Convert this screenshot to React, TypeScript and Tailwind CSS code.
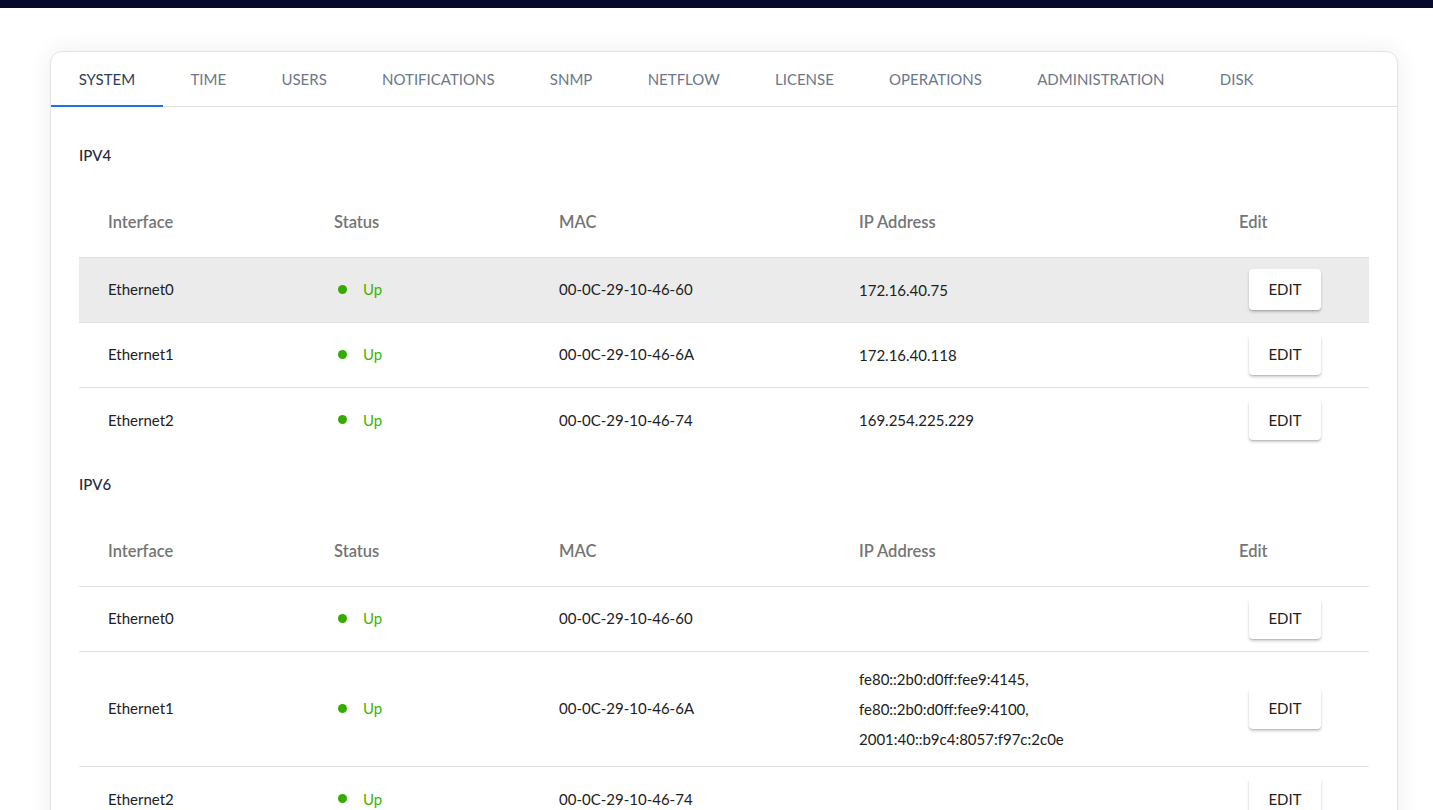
const TABS = [
  "System",
  "Time",
  "Users",
  "Notifications",
  "SNMP",
  "Netflow",
  "License",
  "Operations",
  "Administration",
  "Disk",
];

type Row = { name: string; mac: string; ips: string[] };

const IPV4_ROWS: Row[] = [
  { name: "Ethernet0", mac: "00-0C-29-10-46-60", ips: ["172.16.40.75"] },
  { name: "Ethernet1", mac: "00-0C-29-10-46-6A", ips: ["172.16.40.118"] },
  { name: "Ethernet2", mac: "00-0C-29-10-46-74", ips: ["169.254.225.229"] },
];

const IPV6_ROWS: Row[] = [
  { name: "Ethernet0", mac: "00-0C-29-10-46-60", ips: [] },
  {
    name: "Ethernet1",
    mac: "00-0C-29-10-46-6A",
    ips: [
      "fe80::2b0:d0ff:fee9:4145,",
      "fe80::2b0:d0ff:fee9:4100,",
      "2001:40::b9c4:8057:f97c:2c0e",
    ],
  },
  { name: "Ethernet2", mac: "00-0C-29-10-46-74", ips: [] },
];

function InterfaceTable({ rows, hovered }: { rows: Row[]; hovered?: number }) {
  return (
    <table className="w-full table-fixed border-collapse mt-[26px]">
      <colgroup>
        <col className="w-[226px]" />
        <col className="w-[225px]" />
        <col className="w-[300px]" />
        <col className="w-[380px]" />
        <col />
      </colgroup>
      <thead>
        <tr className="h-[66px] border-b border-[#e0e0e0]">
          {["Interface", "Status", "MAC", "IP Address", "Edit"].map((h) => (
            <th
              key={h}
              className="pl-[29px] text-left font-semibold text-[16.5px] text-[#757575] pb-[2px]"
            >
              {h}
            </th>
          ))}
        </tr>
      </thead>
      <tbody>
        {rows.map((row, i) => (
          <tr
            key={row.name}
            className={`text-[15px] text-[#212121] ${i < rows.length - 1 ? "border-b border-[#e0e0e0]" : ""} ${hovered === i ? "bg-[#ebebeb]" : ""}`}
          >
            <td className="pl-[29px] h-[65px]">{row.name}</td>
            <td className="pl-[33px]">
              <span className="flex items-center gap-[16px] text-[#3db300]">
                <span className="w-[9px] h-[9px] rounded-full bg-[#35ab00]" />
                Up
              </span>
            </td>
            <td className="pl-[29px]">{row.mac}</td>
            <td className="pl-[29px] py-[12px]">
              {row.ips.map((ip) => (
                <div key={ip} className="leading-[30px]">
                  {ip}
                </div>
              ))}
            </td>
            <td className="pl-[39px]">
              <button className="w-[72px] h-[41px] bg-white rounded-[4px] text-[15px] text-[#212121] shadow-[0_2px_3px_rgba(0,0,0,0.2),0_1px_1px_rgba(0,0,0,0.1)]">
                EDIT
              </button>
            </td>
          </tr>
        ))}
      </tbody>
    </table>
  );
}

export default function App() {
  return (
    <div className="min-h-screen bg-white font-['Lato','Liberation_Sans',sans-serif]">
      <div className="h-2 bg-[#070a2a]" />
      <div className="mt-[43px] ml-[50px] mr-[35px] bg-white rounded-t-[12px] border border-[#e3e3e3] shadow-[0_0_24px_rgba(0,0,0,0.07)]">
        <div className="flex h-[55px] border-b border-[#e0e0e0]">
          {TABS.map((tab, i) => (
            <div
              key={tab}
              className={`relative flex items-center px-[27.65px] text-[15px] uppercase ${i === 0 ? "text-[#2c3e55]" : "text-[#6b778a]"}`}
            >
              {tab}
              {i === 0 && (
                <span className="absolute left-0 right-0 -bottom-px h-[2px] bg-[#1a73e8]" />
              )}
            </div>
          ))}
        </div>
        <div className="px-[28px] pb-10">
          <div className="pt-[38px] text-[15px] font-medium text-[#1f2a3a] leading-5">
            IPV4
          </div>
          <InterfaceTable rows={IPV4_ROWS} hovered={0} />
          <div className="pt-[22px] text-[15px] font-medium text-[#1f2a3a] leading-5">
            IPV6
          </div>
          <InterfaceTable rows={IPV6_ROWS} />
        </div>
      </div>
    </div>
  );
}
